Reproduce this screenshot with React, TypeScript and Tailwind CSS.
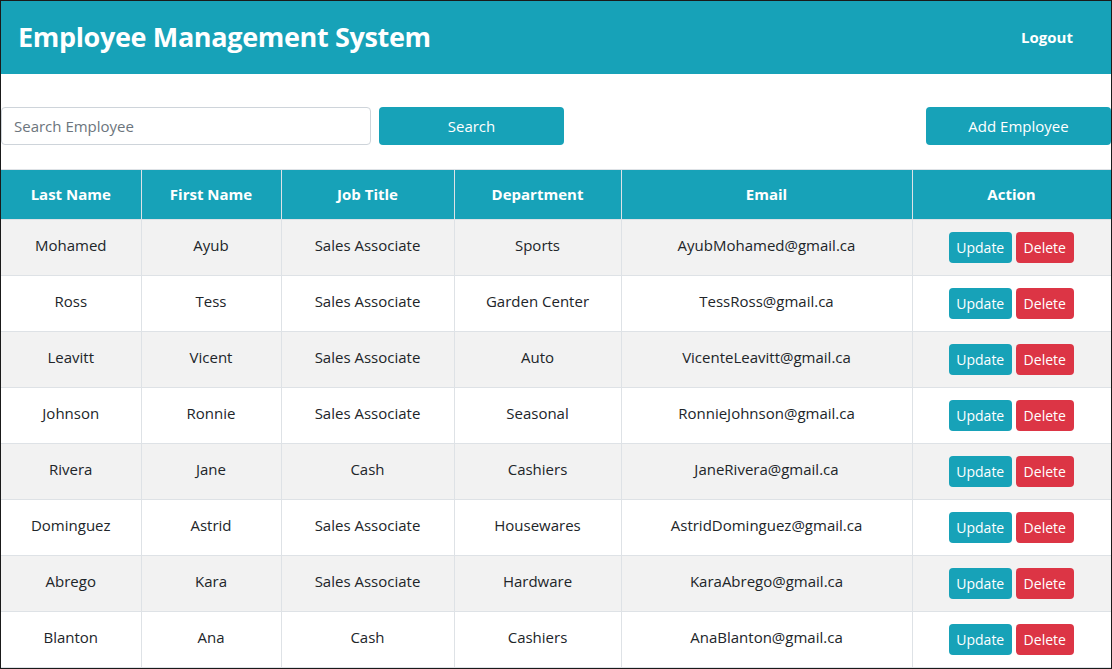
import React from "react";

const rows = [
  ["Mohamed", "Ayub", "Sales Associate", "Sports", "AyubMohamed@gmail.ca"],
  ["Ross", "Tess", "Sales Associate", "Garden Center", "TessRoss@gmail.ca"],
  ["Leavitt", "Vicent", "Sales Associate", "Auto", "VicenteLeavitt@gmail.ca"],
  ["Johnson", "Ronnie", "Sales Associate", "Seasonal", "RonnieJohnson@gmail.ca"],
  ["Rivera", "Jane", "Cash", "Cashiers", "JaneRivera@gmail.ca"],
  ["Dominguez", "Astrid", "Sales Associate", "Housewares", "AstridDominguez@gmail.ca"],
  ["Abrego", "Kara", "Sales Associate", "Hardware", "KaraAbrego@gmail.ca"],
  ["Blanton", "Ana", "Cash", "Cashiers", "AnaBlanton@gmail.ca"],
];

const headers = ["Last Name", "First Name", "Job Title", "Department", "Email", "Action"];
const widths = ["w-[140px]", "w-[140px]", "w-[173px]", "w-[167px]", "w-[291px]", "w-[199px]"];

export default function App() {
  return (
    <div
      className="w-[1112px] h-[669px] border border-[#1a1a1a] bg-white overflow-hidden text-[#212529]"
      style={{ fontFamily: '"Open Sans", "Noto Sans", sans-serif' }}
    >
      <header className="h-[73px] bg-[#17a2b8] flex items-center justify-between pl-[17px] pr-[38px]">
        <h1 className="text-[27px] font-bold text-white tracking-[-0.35px]">Employee Management System</h1>
        <span className="text-[15px] font-bold text-white">Logout</span>
      </header>

      <div className="mt-[33px] flex items-center h-[38px]">
        <input
          placeholder="Search Employee"
          className="w-[370px] h-[38px] border border-[#ced4da] rounded-[4px] px-[12px] text-[15px] placeholder-[#6c757d] outline-none"
        />
        <button className="ml-[8px] w-[185px] h-[38px] bg-[#17a2b8] text-white rounded-[4px] text-[15px]">
          Search
        </button>
        <button className="ml-auto w-[185px] h-[38px] bg-[#17a2b8] text-white rounded-[4px] text-[15px]">
          Add Employee
        </button>
      </div>

      <table className="mt-[24px] table-fixed border-collapse w-[1110px] text-[15px]">
        <thead>
          <tr className="h-[50px] bg-[#17a2b8] text-white">
            {headers.map((h, i) => (
              <th
                key={h}
                className={`${widths[i]} border border-[#dee2e6] font-bold text-center first:border-l-0`}
              >
                {h}
              </th>
            ))}
          </tr>
        </thead>
        <tbody>
          {rows.map((r, idx) => (
            <tr key={idx} className={`h-[56px] ${idx % 2 === 0 ? "bg-[#f2f2f2]" : "bg-white"}`}>
              {r.map((c, i) => (
                <td key={i} className="border border-[#dee2e6] text-center first:border-l-0 pb-[4px]">
                  {c}
                </td>
              ))}
              <td className="border border-[#dee2e6] text-center border-r-0">
                <div className="flex justify-center gap-[4px] pr-[1px]">
                  <button className="w-[63px] h-[31px] bg-[#17a2b8] text-white rounded-[4px] text-[14px]">
                    Update
                  </button>
                  <button className="w-[58px] h-[31px] bg-[#dc3545] text-white rounded-[4px] text-[14px]">
                    Delete
                  </button>
                </div>
              </td>
            </tr>
          ))}
        </tbody>
      </table>
    </div>
  );
}
